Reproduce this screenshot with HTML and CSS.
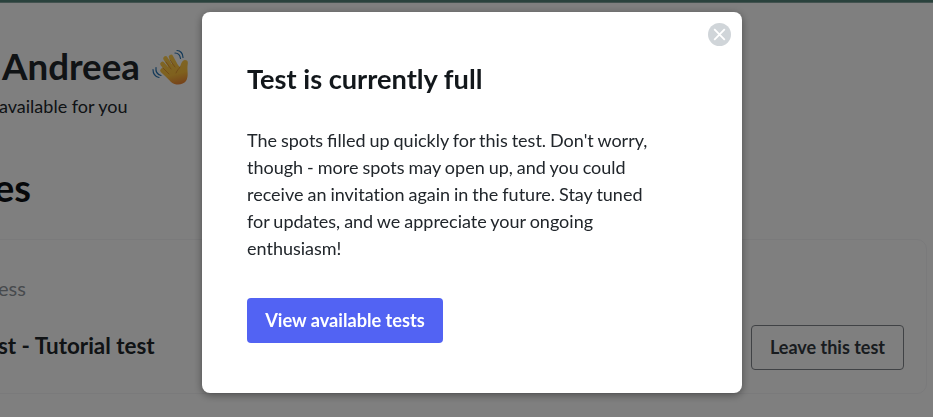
FILE: index.html
```html
<!DOCTYPE html>
<html lang="en">

<head>
  <meta charset="utf-8">
  <title>Test is currently full</title>
  <meta name="viewport" content="width=device-width, initial-scale=1.0">
  <link rel="stylesheet" href="styles.css">
</head>

<body>
  <div class="topbar"></div>

  <div class="page">
    <h1 class="greeting">
      <span>Andreea</span>
      <svg class="wave" viewBox="0 0 38 38">
        <defs>
          <linearGradient id="skin" gradientUnits="userSpaceOnUse" x1="18" y1="6" x2="26" y2="36">
            <stop offset="0" stop-color="#ffce4e" />
            <stop offset="0.65" stop-color="#ffc23c" />
            <stop offset="1" stop-color="#ec8535" />
          </linearGradient>
        </defs>
        <g fill="none" stroke="url(#skin)" stroke-width="4.6" stroke-linecap="round">
          <path d="M14.5 9.500 L22 21" />
          <path d="M20 8 L26 19" />
          <path d="M11.500 15 L20 25" />
          <path d="M11.500 21.500 L20 29" />
        </g>
        <path fill="url(#skin)" d="M13 21 L23 13 L29 18 C30 15 31 11 34 11 C37.500 11 37 14 36.500 17 C36 22 38 27 35 32 C32 36 25 37 20 33 L10.500 23 Z" />
        <path fill="none" stroke="#dc8a2c" stroke-width="0.8" stroke-linecap="round" d="M15 13 L20 20 M19 11 L24 18 M12 19 L18 25 M29 18 C28 20 26 21 25 24" />
        <g fill="none" stroke="#2874b4" stroke-width="1.200" stroke-linecap="round">
          <path d="M24 4 C27 4 29 6 29.500 9.500" />
          <path d="M26 1.500 C29.500 1.500 32 4.500 32 8.500" />
          <path d="M5 18.500 C4.500 22.500 6.500 25.500 10 26.500" />
          <path d="M2 20.500 C2 24.500 4 27.500 8 28.500" />
        </g>
      </svg>
    </h1>
    <p class="intro">available for you</p>
    <h2 class="section-title">es</h2>

    <div class="test-card">
      <div class="status">ess</div>
      <div class="test-row">
        <h3 class="test-name">st - Tutorial test</h3>
        <button class="btn btn-outline">Leave this test</button>
      </div>
    </div>
  </div>

  <!-- Dialog -->
  <div class="overlay">
    <div class="modal">
      <button class="close" aria-label="Close">
        <svg viewBox="0 0 24 24">
          <circle cx="12" cy="12" r="12" fill="#d0d5d9" />
          <path d="M6.500 6.500 L17.500 17.500 M17.500 6.500 L6.500 17.500" stroke="#fff" stroke-width="1.900" />
        </svg>
      </button>
      <h2 class="modal-title">Test is currently full</h2>
      <p class="modal-text">The spots filled up quickly for this test. Don't worry, though - more spots may open up, and you could receive an <span class="plain">invitation</span> again in the future. Stay tuned for updates, and we appreciate your ongoing enthusiasm!</p>
      <button class="btn btn-primary">View available tests</button>
    </div>
  </div>
</body>

</html>
```
FILE: styles.css
```css
* {
  box-sizing: border-box;
}

body {
  margin: 0;
  height: 417px;
  overflow: hidden;
  font-family: Lato, sans-serif;
  font-size: 18px;
  color: #21262b;
  background-color: white;
}

h1,
h2,
h3,
p {
  margin: 0;
}

/* -------------------------------- PAGE ------------------------------- */

.topbar {
  height: 3px;
  background-color: #55857b;
  border-bottom: 1px solid #85a59e;
}

.greeting {
  display: flex;
  align-items: center;
  gap: 11px;
  height: 46px;
  margin: 40px 0 0 2px;
  font-size: 36.7px;
  font-weight: 700;
}

.wave {
  width: 38px;
  height: 38px;
  margin-top: 3px;
}

.intro {
  margin-top: 4px;
  margin-left: -1px;
  line-height: 27px;
}

.section-title {
  margin-top: 43px;
  margin-left: -6px;
  font-size: 38px;
  line-height: 48px;
  font-weight: 700;
  color: #0d1114;
}

/* -------------------------------- CARD ------------------------------- */

.test-card {
  width: 947px;
  height: 155px;
  margin: 28px 0 0 -20px;
  padding: 35px 22px 0 17px;
  border: 1px solid #f4f4f6;
  border-radius: 10px;
}

.status {
  font-size: 20px;
  line-height: 27px;
  color: #8f959b;
}

.test-row {
  display: flex;
  align-items: center;
  justify-content: space-between;
  margin-top: 23px;
}

.test-name {
  margin-top: -4px;
  font-size: 22.4px;
  font-weight: 700;
}

/* ------------------------------- BUTTON ------------------------------ */

.btn {
  height: 45px;
  padding: 0 0 2px;
  font-family: inherit;
  font-size: 18px;
  font-weight: 700;
  border: none;
  border-radius: 4px;
  cursor: pointer;
}

.btn-outline {
  width: 153px;
  color: #32383e;
  background: none;
  border: 1px solid #81858a;
}

.btn-primary {
  width: 196px;
  margin-top: 36px;
  font-size: 18.2px;
  color: white;
  background-color: #5263f3;
}

/* ------------------------------- DIALOG ------------------------------ */

.overlay {
  position: fixed;
  inset: 0;
  padding-top: 12px;
  padding-left: 202px;
  background-color: rgba(0, 0, 0, .5);
}

.modal {
  position: relative;
  width: 540px;
  height: 381px;
  padding: 49px 45px 0;
  background-color: white;
  border-radius: 8px;
  box-shadow: 0 2px 8px rgba(0, 0, 0, .4);
}

.close {
  position: absolute;
  top: 11px;
  right: 11px;
  padding: 0;
  background: none;
  border: none;
  cursor: pointer;
}

.close svg {
  display: block;
  width: 23px;
  height: 23px;
}

.modal-title {
  font-size: 27.2px;
  line-height: 36px;
  font-weight: 700;
  color: #12171b;
}

.modal-text {
  max-width: 420px;
  margin-top: 30px;
  line-height: 27px;
  word-spacing: -.65px;
}

.plain {
  font-variant-ligatures: none;
}
```
